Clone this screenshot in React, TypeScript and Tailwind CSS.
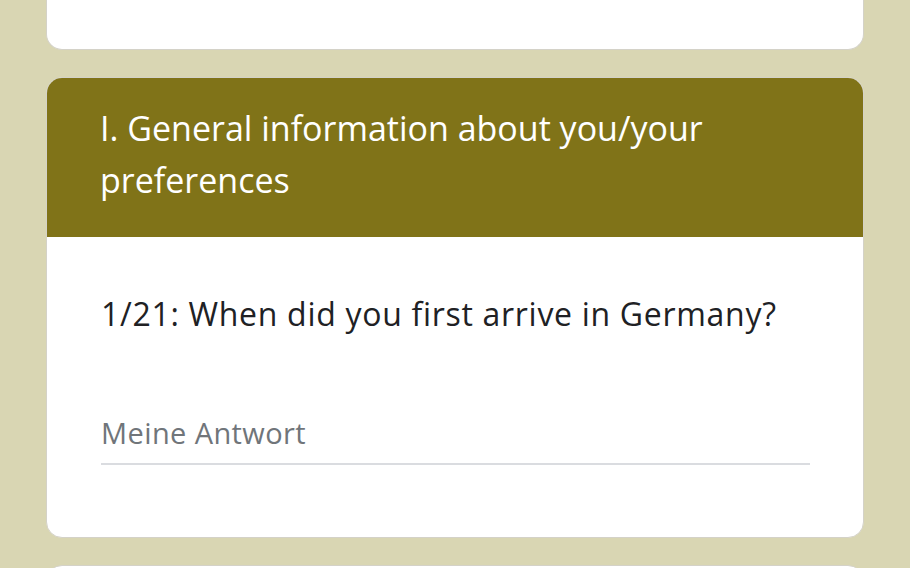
export default function App() {
  return (
    <div className="h-[568px] w-[910px] overflow-hidden bg-[#d9d6b3] px-[46px] font-['Open_Sans',sans-serif]">
      {/* previous card, scrolled mostly out of view */}
      <div className="h-[50px] rounded-b-[16px] border-x border-b border-[#d4d2c8] bg-white"></div>

      {/* section card */}
      <div className="mt-[27px] overflow-hidden rounded-[16px] border border-[#d4d2c8] bg-white">
        <div className="h-[159px] bg-[#807318] px-[53px] pt-[24px]">
          <h2 className="text-[34px] leading-[52px] text-white">
            I. General information about you/your preferences
          </h2>
        </div>
        <div className="h-[300px] px-[54px] pt-[57px]">
          <p className="text-[32px] leading-[40px] tracking-[0.7px] text-[#202124]">
            1/21: When did you first arrive in Germany?
          </p>
          <div className="mt-[79px] w-[709px] border-b-2 border-[#dadce0] pb-[10px]">
            <span className="text-[29px] leading-[40px] tracking-[0.4px] text-[#70757a]">Meine Antwort</span>
          </div>
        </div>
      </div>

      {/* next card */}
      <div className="mt-[27px] h-[40px] rounded-t-[16px] border border-[#d4d2c8] bg-white"></div>
    </div>
  );
}
